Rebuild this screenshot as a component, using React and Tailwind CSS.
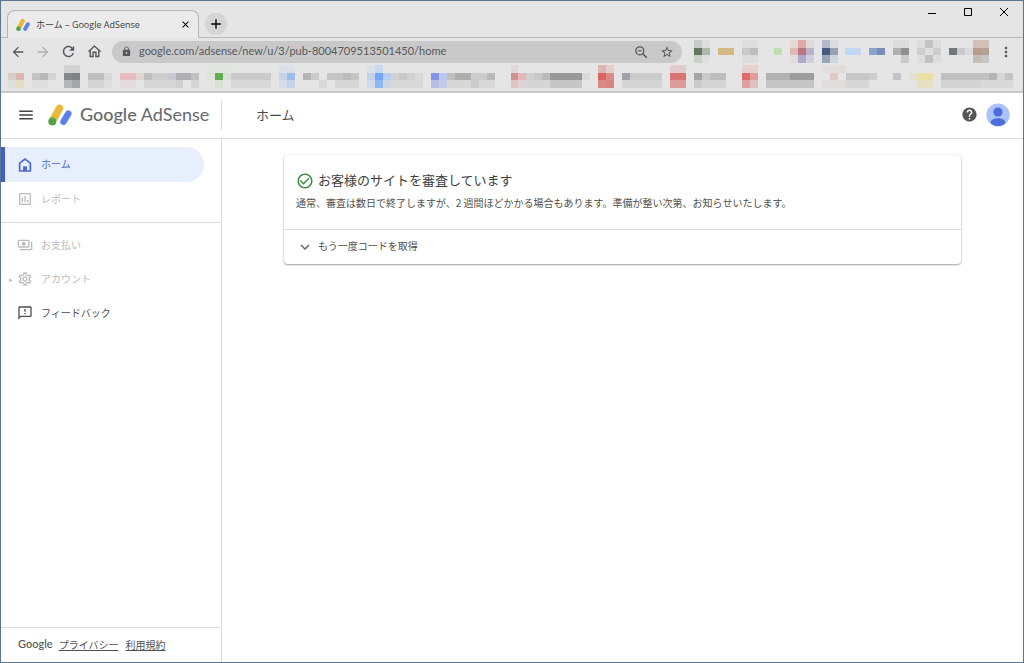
import {
  MdAdd,
  MdArrowBack,
  MdArrowForward,
  MdCheckCircleOutline,
  MdClose,
  MdExpandMore,
  MdHelp,
  MdLock,
  MdMenu,
  MdMoreVert,
  MdOutlineFeedback,
  MdOutlineHome,
  MdOutlineInsertChart,
  MdOutlinePayments,
  MdOutlineSettings,
  MdRefresh,
  MdStarBorder,
} from "react-icons/md";

// [column, row, span, colour]
const EXTENSION_CELLS = [
  [0, 0, 1, "#c5cbc9"], [1, 0, 1, "#dcdedc"], [0, 1, 1, "#64755f"], [1, 1, 1, "#adb8ab"], [0, 2, 1, "#c8d0c8"], [1, 2, 1, "#dde0dc"],
  [3, 1, 2, "#d6b982"],
  [6, 0, 2, "#dedede"], [6, 1, 1, "#c9c9c9"], [7, 1, 1, "#bdbdbd"], [6, 2, 2, "#dddddd"],
  [10, 1, 1, "#bfe0b0"],
  [12, 0, 1, "#e5d8d6"], [13, 0, 1, "#dda9a5"], [14, 0, 1, "#e2dada"], [12, 1, 1, "#dfb9b5"], [13, 1, 1, "#bb7581"], [14, 1, 1, "#b8b4c9"], [12, 2, 1, "#e2dcdc"], [13, 2, 1, "#acacc8"], [14, 2, 1, "#d0cfdb"],
  [16, 0, 1, "#b3bac9"], [17, 0, 1, "#dadce0"], [16, 1, 1, "#455a82"], [17, 1, 1, "#979fb3"], [16, 2, 1, "#99a4b8"], [17, 2, 1, "#d0d4dc"],
  [19, 1, 1, "#bcdafa"], [20, 1, 1, "#c5d8f0"],
  [22, 1, 1, "#8ca3cd"], [23, 1, 1, "#788db9"],
  [25, 0, 2, "#dcdcdc"], [25, 1, 1, "#b0b0b0"], [26, 1, 1, "#8f908e"], [26, 2, 1, "#cacaca"],
  [28, 0, 1, "#dddddd"], [29, 0, 1, "#c3c3c3"], [30, 0, 1, "#dcdcdc"], [28, 1, 1, "#cfcfcf"], [29, 1, 1, "#dfdfdf"], [30, 1, 1, "#cdcdcd"], [28, 2, 1, "#dddddd"], [29, 2, 1, "#c0c0c0"], [30, 2, 1, "#dddddd"],
  [32, 1, 1, "#74777a"], [33, 1, 1, "#c8cacc"], [34, 1, 1, "#d8dadc"],
  [35, 0, 2, "#d3c1b9"], [35, 1, 1, "#bd9a89"], [36, 1, 1, "#b5a296"], [35, 2, 1, "#c5bcb8"], [36, 2, 1, "#cac5c2"],
];

const BOOKMARK_CELLS = [
  [0, 1, 1, "#d8cfc8"], [1, 1, 1, "#dcb7b0"], [0, 2, 1, "#dbe0da"], [1, 2, 1, "#e6dcc2"],
  [3, 1, 1, "#c5c2c4"], [4, 1, 1, "#b9b6b8"], [5, 1, 1, "#d6d4d5"], [3, 2, 2, "#dedede"],
  [7, 0, 2, "#d2d2d2"], [7, 1, 1, "#85888b"], [8, 1, 1, "#7f8286"], [7, 2, 1, "#b5b6b8"], [8, 2, 1, "#a5a6a7"],
  [10, 1, 2, "#bfbfc0"], [12, 1, 1, "#d8d8d8"], [10, 2, 2, "#d5d5d5"], [12, 2, 1, "#dedede"],
  [14, 1, 2, "#e6bcc0"], [16, 1, 1, "#e3d4d4"], [14, 2, 2, "#e2dcdc"],
  [17, 1, 1, "#bdbec0"], [18, 1, 3, "#cecece"], [20, 1, 1, "#c8c8d1"], [21, 1, 2, "#b0b0b2"], [23, 1, 1, "#c0c0c1"], [17, 2, 4, "#d7d7d7"], [21, 2, 1, "#d0d0d0"], [23, 2, 1, "#d5d5d5"],
  [25, 0, 3, "#e0e4df"], [25, 1, 1, "#dce5d9"], [26, 1, 1, "#63ae55"], [27, 1, 1, "#d9e1d6"], [26, 2, 1, "#d4e3d0"],
  [28, 1, 5, "#cacaca"], [28, 2, 5, "#d8d8d8"],
  [34, 0, 2, "#dde1e7"], [34, 1, 1, "#c5d3e8"], [35, 1, 1, "#9cbdea"], [34, 2, 1, "#d5dde8"], [35, 2, 1, "#c3d3e8"],
  [37, 1, 1, "#b5b5b6"], [38, 1, 1, "#cbcbcb"], [40, 1, 2, "#c5c5c5"], [42, 1, 1, "#bbbbbb"], [43, 1, 1, "#c6c4c5"], [39, 2, 1, "#d8d8d8"], [41, 2, 3, "#d6d6d6"],
  [45, 0, 1, "#dce1e9"], [46, 0, 1, "#c8d8ef"], [45, 1, 1, "#c1d2ec"], [46, 1, 1, "#74a5f8"], [47, 1, 1, "#b9ccee"], [45, 2, 1, "#d0dcea"], [46, 2, 1, "#8eb9ef"], [47, 2, 1, "#cbd5e3"],
  [48, 1, 3, "#d0d0d0"], [49, 1, 1, "#c8c8c8"], [51, 1, 1, "#dadada"], [48, 2, 4, "#d9d9d9"],
  [53, 1, 1, "#8295e6"], [54, 1, 1, "#bdc8ee"], [53, 2, 1, "#b6bee5"], [54, 2, 1, "#c4cbe5"],
  [55, 1, 1, "#c0c0c0"], [56, 1, 2, "#adadad"], [58, 1, 2, "#cccccc"], [60, 1, 1, "#b9b9b9"], [55, 2, 3, "#d7d7d7"], [58, 2, 1, "#cccccc"], [59, 2, 2, "#d8d8d8"],
  [63, 0, 1, "#e2d8d8"], [63, 1, 1, "#cf9290"], [64, 1, 1, "#e3b8b6"], [63, 2, 1, "#dfc3c2"], [64, 2, 1, "#ddd3d3"],
  [65, 1, 1, "#d0d0d0"], [66, 1, 1, "#c8c8c8"], [67, 1, 1, "#bbbbbb"], [68, 1, 4, "#999999"], [72, 1, 1, "#d9d9d9"], [65, 2, 3, "#d5d5d5"], [68, 2, 4, "#c6c6c6"],
  [74, 0, 1, "#dfb5b3"], [75, 0, 1, "#e2cfce"], [74, 1, 1, "#d96560"], [75, 1, 1, "#dd8a86"], [74, 2, 1, "#d98985"], [75, 2, 1, "#d98480"],
  [77, 1, 1, "#a0a2a8"], [78, 1, 4, "#cbcbcb"], [77, 2, 5, "#d5d5d5"],
  [83, 0, 2, "#e2cccb"], [83, 1, 2, "#db7571"], [83, 2, 2, "#db9c99"],
  [86, 1, 1, "#a5a5a5"], [87, 1, 1, "#cacaca"], [88, 1, 2, "#bdbdbd"], [86, 2, 1, "#cbcbcb"], [87, 2, 3, "#d5d5d5"],
  [92, 0, 2, "#e3d0cf"], [92, 1, 1, "#de6c69"], [93, 1, 1, "#e39c99"], [92, 2, 1, "#dda19e"], [93, 2, 1, "#e2c0be"],
  [95, 1, 3, "#b2b0b1"], [98, 1, 3, "#9d9d9d"], [95, 2, 6, "#c5c5c5"],
  [102, 0, 3, "#e2dddd"], [103, 1, 1, "#e0caca"], [102, 2, 3, "#e1dcdc"],
  [105, 1, 3, "#c7c7c7"], [108, 1, 1, "#cfcfcf"], [105, 2, 3, "#d7d7d7"], [111, 1, 1, "#c3c3c3"],
  [113, 1, 1, "#e2dfd3"], [114, 1, 2, "#eae0a5"], [114, 2, 2, "#e6e0c3"],
  [117, 1, 6, "#c1c1c1"], [123, 1, 1, "#b5b5b5"], [124, 1, 1, "#d6d6d6"], [125, 1, 1, "#c4c4c4"], [117, 2, 5, "#d3d3d3"], [122, 2, 4, "#d9d9d9"],
];

const MENU_TOP = [
  { label: "ホーム", icon: HomeIcon, active: true },
  { label: "レポート", icon: MdOutlineInsertChart, muted: true },
];

const MENU_BOTTOM = [
  { label: "お支払い", icon: MdOutlinePayments, muted: true },
  { label: "アカウント", icon: MdOutlineSettings, muted: true, expandable: true },
  { label: "フィードバック", icon: MdOutlineFeedback },
];

function Mosaic({ cells, columns, className, label }) {
  return (
    <svg viewBox={`0 0 ${columns} 3`} preserveAspectRatio="none" shapeRendering="crispEdges" className={className} role="img" aria-label={label}>
      {cells.map(([x, y, span, fill]) => (
        <rect key={`${x}-${y}`} x={x} y={y} width={span} height="1" fill={fill} />
      ))}
    </svg>
  );
}

function AdSenseMark({ className }) {
  return (
    <svg viewBox="0 0 24 22" className={className} aria-hidden="true">
      <path d="M4.300 17.400 11.500 4.300" stroke="#e9b93c" strokeWidth="7.400" strokeLinecap="round" />
      <path d="M15.600 17.700 20.300 9.700" stroke="#5b80ec" strokeWidth="6.600" strokeLinecap="round" />
      <circle cx="4.300" cy="17.400" r="3.900" fill="#4fa34f" />
    </svg>
  );
}

function HomeIcon({ className }) {
  return (
    <svg viewBox="0 0 24 24" className={className} fill="none" stroke="currentColor" strokeWidth="2.6" aria-hidden="true">
      <path d="M4 21V9.2L12 3.2l8 6V21z" />
      <path d="M9 21v-7h6v7z" fill="currentColor" stroke="none" />
    </svg>
  );
}

function ZoomOutIcon({ className }) {
  return (
    <svg viewBox="0 0 14 14" className={className} fill="none" stroke="currentColor" strokeWidth="1.3" aria-hidden="true">
      <circle cx="5.8" cy="5.8" r="4" />
      <path d="M3.900 5.800h3.800" strokeWidth="1.100" />
      <path d="m8.800 8.800 3.900 3.900" strokeWidth="1.600" />
    </svg>
  );
}

function MenuItem({ label, icon: Icon, active, muted, expandable }) {
  const color = active ? "text-[#5068d2]" : muted ? "text-[#bcbcbc]" : "text-[#505058]";
  return (
    <li>
      <a
        href="#"
        aria-current={active ? "page" : undefined}
        className={`flex items-center text-[10px] ${color} ${active ? "mr-[17px] h-[35px] rounded-r-full border-l-4 border-[#3f5fc4] bg-[#e8effc]" : "h-[34px] border-l-4 border-transparent"}`}
      >
        <span className="flex w-3 justify-center text-[7px]">{expandable ? "▸" : null}</span>
        <Icon className="size-4" />
        <span className="ml-2 pb-[2px]">{label}</span>
      </a>
    </li>
  );
}

function BrowserChrome() {
  return (
    <div className="bg-[#e5e5e5] font-['Open_Sans','Noto_Sans_CJK_JP',sans-serif] text-[#3c3c3c]">
      <div className="flex h-[37px] border-b border-[#b8b8b8]">
        <div className="relative ml-[6px] mt-[9px] flex h-7 w-48 items-center rounded-t-lg border border-b-0 border-[#b5b5b5] bg-[#ebebeb] pl-2 pr-[7px]">
          <AdSenseMark className="size-[14px]" />
          <span className="ml-[6px] flex-1 whitespace-nowrap text-[9px]">ホーム – Google AdSense</span>
          <button type="button" aria-label="Close tab" className="text-black"><MdClose className="size-[11px]" /></button>
        </div>
        <button type="button" aria-label="New tab" className="ml-[6px] mt-3 flex size-[22px] items-center justify-center rounded-full bg-[#d4d4d4] text-black">
          <MdAdd className="size-4" />
        </button>
        <div className="ml-auto flex h-[22px] items-center gap-[26px] pr-[14px] text-black">
          <button type="button" aria-label="Minimize"><svg viewBox="0 0 10 10" className="size-[10px]"><path d="M1 6.500h8" stroke="currentColor" /></svg></button>
          <button type="button" aria-label="Maximize"><svg viewBox="0 0 10 10" className="size-[10px]"><path d="M1.500 1.500h7v7h-7z" fill="none" stroke="currentColor" /></svg></button>
          <button type="button" aria-label="Close"><svg viewBox="0 0 10 10" className="size-[10px]"><path d="m1 1 8 8M9 1 1 9" stroke="currentColor" /></svg></button>
        </div>
      </div>
      <div className="flex h-[27px] items-center pl-[9px] pr-[9px] text-[#55585c]">
        <div className="flex gap-[9px]">
          <button type="button" aria-label="Back"><MdArrowBack className="size-4" /></button>
          <button type="button" aria-label="Forward" className="text-[#adadad]"><MdArrowForward className="size-4" /></button>
          <button type="button" aria-label="Reload"><MdRefresh className="size-[17px]" /></button>
          <button type="button" aria-label="Home"><MdOutlineHome className="size-[17px]" /></button>
        </div>
        <div className="ml-[9px] flex h-[22px] min-w-0 flex-1 items-center rounded-full bg-[#c9c9c9] pl-[9px] pr-2">
          <MdLock className="size-[11px]" />
          <input aria-label="Address" readOnly value="google.com/adsense/new/u/3/pub-8004709513501450/home" className="ml-[7px] min-w-0 flex-1 bg-transparent font-['Lato',sans-serif] text-[11px] outline-none" />
          <button type="button" aria-label="Zoom"><ZoomOutIcon className="size-[14px]" /></button>
          <button type="button" aria-label="Bookmark" className="ml-3"><MdStarBorder className="size-[14px]" /></button>
        </div>
        <Mosaic cells={EXTENSION_CELLS} columns={37} className="ml-3 h-[23px] w-[295px]" label="Extensions" />
        <button type="button" aria-label="Menu" className="ml-[9px]"><MdMoreVert className="size-4" /></button>
      </div>
      <div className="h-7 border-b-2 border-[#cacaca] pl-[7px]">
        <Mosaic cells={BOOKMARK_CELLS} columns={126} className="h-[23px] w-[1005px]" label="Bookmarks" />
      </div>
    </div>
  );
}

function Header() {
  return (
    <header className="flex h-[46px] items-center border-b border-[#dcdcdc] pb-[2px]">
      <div className="flex h-[30px] w-[221px] items-center border-r border-[#dcdcdc] pl-4">
        <button type="button" aria-label="Menu" className="text-[#444]"><MdMenu className="size-[18px]" /></button>
        <AdSenseMark className="ml-[13px] h-[22px] w-6 shrink-0" />
        <span className="ml-2 whitespace-nowrap font-['Lato',sans-serif] text-[18px] text-[#66696d]"><span className="font-medium">Google</span> AdSense</span>
      </div>
      <h1 className="ml-[34px] text-[13px] text-[#4a4a4a]">ホーム</h1>
      <div className="ml-auto flex items-center gap-2 pr-[13px]">
        <button type="button" aria-label="Help" className="text-[#555]"><MdHelp className="size-[17px]" /></button>
        <button type="button" aria-label="Account">
          <svg viewBox="0 0 24 24" className="size-6">
            <clipPath id="avatar"><circle cx="12" cy="12" r="11.6" /></clipPath>
            <g clipPath="url(#avatar)">
              <rect width="24" height="24" fill="#a9c2f9" />
              <circle cx="12" cy="9" r="4.600" fill="#4f6cdc" />
              <path d="M4.600 20c0-3.200 3.400-4.800 7.400-4.800s7.400 1.600 7.400 4.800c-1.600 2-4.200 3-7.400 3s-5.800-1-7.400-3z" fill="#4f6cdc" />
            </g>
          </svg>
        </button>
      </div>
    </header>
  );
}

function Sidebar() {
  return (
    <aside className="flex w-[221px] flex-col border-r border-[#dcdcdc]">
      <nav>
        <ul className="border-b border-[#dcdcdc] pb-[6px] pt-2">
          {MENU_TOP.map((item) => <MenuItem key={item.label} {...item} />)}
        </ul>
        <ul className="pt-[5px]">
          {MENU_BOTTOM.map((item) => <MenuItem key={item.label} {...item} />)}
        </ul>
      </nav>
      <footer className="mt-auto flex h-[35px] items-center border-t border-[#dcdcdc] pb-[2px] pl-[17px] text-[10px] text-[#505050]">
        <span className="font-['Lato',sans-serif] text-[11px] font-medium text-[#555]">Google</span>
        <a href="#" className="ml-[6px] underline">プライバシー</a>
        <a href="#" className="ml-[7px] underline">利用規約</a>
      </footer>
    </aside>
  );
}

function ReviewCard() {
  return (
    <section className="rounded-sm bg-white text-[#505050] shadow-[0_1px_2px_rgba(0,0,0,0.35),0_0_2px_rgba(0,0,0,0.12)]">
      <div className="h-[74px] px-3 pt-4">
        <h2 className="flex items-center text-[13px] leading-[18px] text-[#404040]">
          <MdCheckCircleOutline className="mr-1 size-[18px] text-[#3f8a46]" />
          <span className="pb-[2px]">お客様のサイトを審査しています</span>
        </h2>
        <p className="mt-1 text-[10px] leading-4">通常、審査は数日で終了しますが、2 週間ほどかかる場合もあります。準備が整い次第、お知らせいたします。</p>
      </div>
      <button type="button" aria-expanded="false" className="flex h-[35px] w-full items-center border-t border-[#dcdcdc] px-3 text-[10px]">
        <MdExpandMore className="mr-1 size-[18px] text-[#666]" />
        <span className="pb-1">もう一度コードを取得</span>
      </button>
    </section>
  );
}

export default function App() {
  return (
    <div className="flex min-h-screen flex-col border border-[#5b7693] bg-white font-['Noto_Sans_CJK_JP',sans-serif]">
      <BrowserChrome />
      <Header />
      <div className="flex flex-1">
        <Sidebar />
        <main className="flex-1 px-[62px] pt-4">
          <ReviewCard />
        </main>
      </div>
    </div>
  );
}
